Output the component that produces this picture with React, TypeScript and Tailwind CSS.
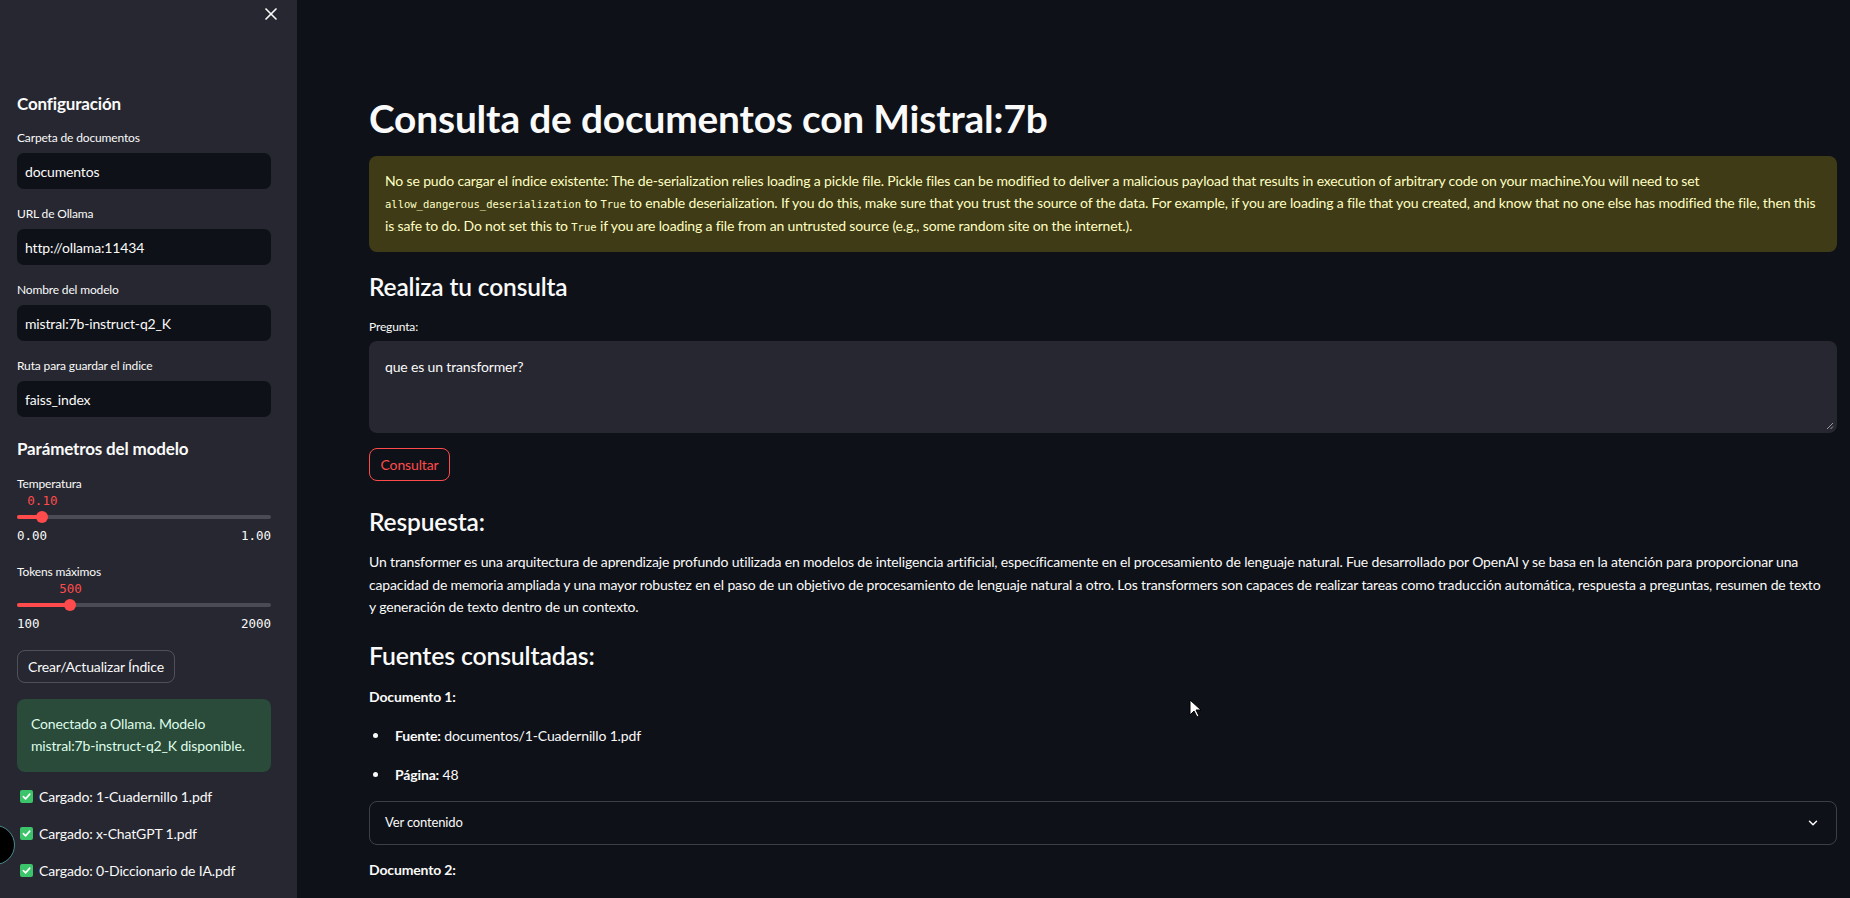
import { X, ChevronDown } from "lucide-react";

const fields = [
  { label: "Carpeta de documentos", value: "documentos" },
  { label: "URL de Ollama", value: "http://ollama:11434" },
  { label: "Nombre del modelo", value: "mistral:7b-instruct-q2_K" },
  { label: "Ruta para guardar el índice", value: "faiss_index" },
];

const loaded = ["1-Cuadernillo 1.pdf", "x-ChatGPT 1.pdf", "0-Diccionario de IA.pdf"];

function Slider({
  label,
  value,
  min,
  max,
  pct,
  className,
}: {
  label: string;
  value: string;
  min: string;
  max: string;
  pct: number;
  className?: string;
}) {
  return (
    <div className={className}>
      <div className="h-5 flex items-center text-[12px]">{label}</div>
      <div className="relative h-[14px] font-['DejaVu_Sans_Mono',monospace] text-[12.5px] leading-[14px] tracking-normal text-[#ff4b4b]">
        <span className="absolute top-0 -translate-x-1/2" style={{ left: `${pct}%` }}>
          {value}
        </span>
      </div>
      <div className="mt-[3px] h-3 flex items-center">
        <div className="relative w-full h-1 rounded-full bg-[#4a4b55]">
          <div className="h-1 rounded-full bg-[#ff4b4b]" style={{ width: `${pct}%` }} />
          <div
            className="absolute top-1/2 -translate-y-1/2 -translate-x-1/2 w-3 h-3 rounded-full bg-[#ff4b4b]"
            style={{ left: `${pct}%` }}
          />
        </div>
      </div>
      <div className="mt-[5px] h-4 flex items-center justify-between font-['DejaVu_Sans_Mono',monospace] text-[12.5px] tracking-normal">
        <span>{min}</span>
        <span>{max}</span>
      </div>
    </div>
  );
}

function Code({ children }: { children: string }) {
  return <code className="font-['DejaVu_Sans_Mono',monospace] text-[10.5px] tracking-normal">{children}</code>;
}

export default function App() {
  return (
    <div className="relative flex h-screen w-full overflow-hidden bg-[#0e1117] font-['Lato',sans-serif] tracking-[-0.15px] text-[#fafafa]">
      {/* Sidebar */}
      <aside className="w-[297px] shrink-0 bg-[#262730] pl-[17px] pr-[26px] flex flex-col">
        <div className="h-[27px] flex items-center justify-end">
          <X size={20} strokeWidth={2} className="-mr-[10px] text-[#fafafa]" />
        </div>

        <h2 className="mt-[65px] h-6 flex items-center text-[17px] font-bold">Configuración</h2>

        <div className="mt-3 flex flex-col gap-[15px]">
          {fields.map((f) => (
            <div key={f.label}>
              <div className="h-5 flex items-center text-[12px]">{f.label}</div>
              <div className="mt-[5px] h-9 rounded-[7px] bg-[#0e1117] px-2 flex items-center text-[14px]">
                {f.value}
              </div>
            </div>
          ))}
        </div>

        <h2 className="mt-5 h-6 flex items-center text-[17px] font-bold">Parámetros del modelo</h2>

        <Slider className="mt-[13px]" label="Temperatura" value="0.10" min="0.00" max="1.00" pct={10} />
        <Slider className="mt-[18px]" label="Tokens máximos" value="500" min="100" max="2000" pct={21.05} />

        <button className="mt-[18px] self-start h-[33px] px-[10px] rounded-lg border border-[#fafafa]/20 text-[14px]">
          Crear/Actualizar Índice
        </button>

        <div className="mt-4 rounded-lg bg-[#2a4a3a] p-[14px] text-[14px] leading-[22.4px] text-[#dffde9]">
          Conectado a Ollama. Modelo mistral:7b-instruct-q2_K disponible.
        </div>

        <div className="mt-[13px] flex flex-col gap-[13px]">
          {loaded.map((name) => (
            <div key={name} className="h-6 flex items-center gap-[6px] pl-[3px] text-[14px]">
              <span className="w-[13px] h-[13px] rounded-[2px] bg-[#3cc46b] flex items-center justify-center">
                <svg width="9" height="9" viewBox="0 0 10 10" fill="none">
                  <path d="M1.5 5.2 4 7.6 8.6 2.4" stroke="white" strokeWidth="1.8" strokeLinecap="round" strokeLinejoin="round" />
                </svg>
              </span>
              <span>Cargado: {name}</span>
            </div>
          ))}
        </div>
      </aside>

      {/* Main */}
      <main className="relative flex-1 pl-[72px] pr-[13px] flex flex-col">
        <h1 className="mt-[94px] h-12 flex items-center text-[38.8px] font-bold">
          Consulta de documentos con Mistral:7b
        </h1>

        <div className="mt-[14px] rounded-lg bg-[#3e3b16] px-4 py-[14px] text-[14px] leading-[22px] text-[#ffffc2]">
          No se pudo cargar el índice existente: The de-serialization relies loading a pickle file. Pickle files can be
          modified to deliver a malicious payload that results in execution of arbitrary code on your machine.You will
          need to set
          <br />
          <Code>allow_dangerous_deserialization</Code> to <Code>True</Code> to enable deserialization. If you do this,
          make sure that you trust the source of the data. For example, if you are loading a file that you created, and
          know that no one else has modified the file, then this
          <br />
          is safe to do. Do not set this to <Code>True</Code> if you are loading a file from an untrusted source (e.g.,
          some random site on the internet.).
        </div>

        <h3 className="mt-[18px] h-[34px] flex items-center text-[24.5px] font-semibold">Realiza tu consulta</h3>

        <div className="mt-[13px] h-5 flex items-center text-[12px]">Pregunta:</div>
        <div className="relative mt-1 h-[92px] rounded-lg bg-[#262730] px-4 pt-[15px] text-[14px] leading-[22px]">
          que es un transformer?
          <svg className="absolute right-[3px] bottom-[3px]" width="8" height="8" viewBox="0 0 8 8">
            <path d="M7 1 1 7M7 4.5 4.5 7" stroke="#9a9aa2" strokeWidth="1" />
          </svg>
        </div>

        <button className="mt-[15px] self-start h-[33px] w-[81px] rounded-lg border border-[#ff4b4b] text-[14px] text-[#ff4b4b]">
          Consultar
        </button>

        <h3 className="mt-6 h-[34px] flex items-center text-[24.5px] font-semibold">Respuesta:</h3>
        <p className="mt-3 text-[14px] leading-[22.5px]">
          Un transformer es una arquitectura de aprendizaje profundo utilizada en modelos de inteligencia artificial,
          específicamente en el procesamiento de lenguaje natural. Fue desarrollado por OpenAI y se basa en la atención
          para proporcionar una
          <br />
          capacidad de memoria ampliada y una mayor robustez en el paso de un objetivo de procesamiento de lenguaje
          natural a otro. Los transformers son capaces de realizar tareas como traducción automática, respuesta a
          preguntas, resumen de texto
          <br />y generación de texto dentro de un contexto.
        </p>

        <h3 className="mt-5 h-[34px] flex items-center text-[24.8px] font-semibold">Fuentes consultadas:</h3>

        <div className="mt-[13px] h-[22px] flex items-center text-[14px] font-bold">Documento 1:</div>
        <div className="mt-[17px] h-[22px] flex items-center text-[14px]">
          <span className="ml-1 w-[5px] h-[5px] rounded-full bg-[#fafafa]" />
          <span className="ml-[17px]">
            <b>Fuente:</b> documentos/1-Cuadernillo 1.pdf
          </span>
        </div>
        <div className="mt-[17px] h-[22px] flex items-center text-[14px]">
          <span className="ml-1 w-[5px] h-[5px] rounded-full bg-[#fafafa]" />
          <span className="ml-[17px]">
            <b>Página:</b> 48
          </span>
        </div>

        <div className="mt-[15px] h-[44px] rounded-lg border border-[#fafafa]/20 pl-[15px] pr-4 flex items-center justify-between text-[13px]">
          <span>Ver contenido</span>
          <ChevronDown size={14} strokeWidth={2.5} />
        </div>

        <div className="mt-[14px] h-[22px] flex items-center text-[14px] font-bold">Documento 2:</div>

        {/* mouse pointer */}
        <svg className="absolute left-[892px] top-[699px]" width="12" height="19" viewBox="0 0 12 19">
          <path d="M1 1v15l4-4 3 6 2-1-3-6h5z" fill="white" stroke="black" strokeWidth="1" />
        </svg>
      </main>

      {/* floating button at bottom-left edge */}
      <div className="absolute left-[-25px] top-[825px] w-10 h-10 rounded-full bg-black border border-[#4b8b8f]" />
    </div>
  );
}
